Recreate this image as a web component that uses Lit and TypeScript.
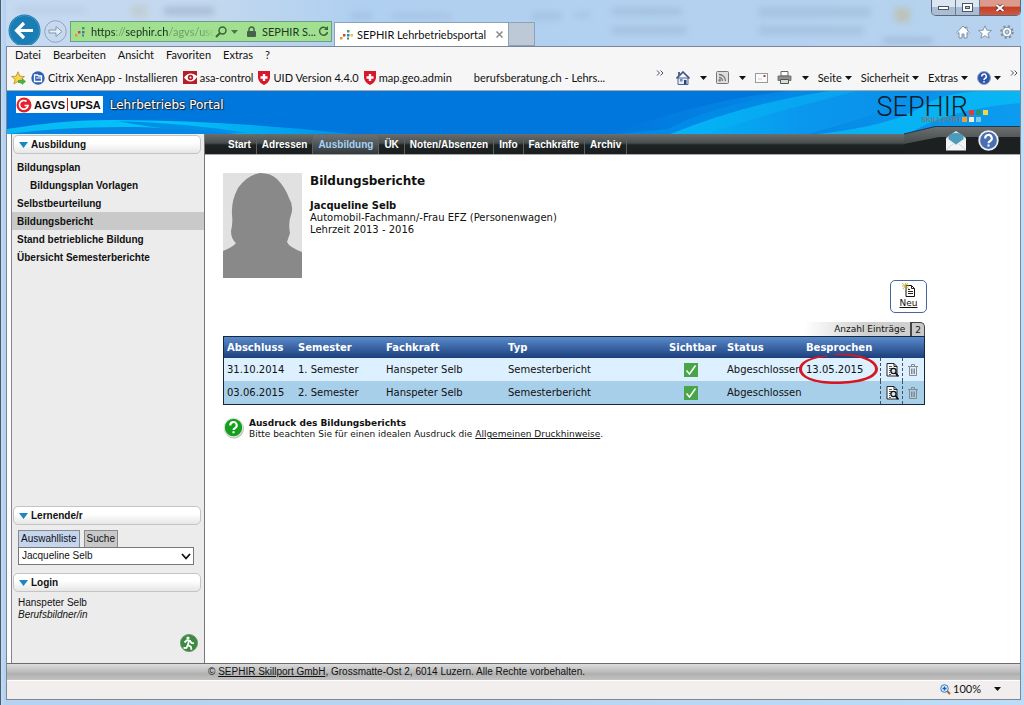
import { LitElement, html, svg, css } from "lit";
import { customElement, property, state } from "lit/decorators.js";
import { classMap } from "lit/directives/class-map.js";

interface Report {
  closed: string;
  semester: string;
  coach: string;
  type: string;
  status: string;
  discussed: string;
}

const REPORTS: Report[] = [
  { closed: "31.10.2014", semester: "1. Semester", coach: "Hanspeter Selb", type: "Semesterbericht", status: "Abgeschlossen", discussed: "13.05.2015" },
  { closed: "03.06.2015", semester: "2. Semester", coach: "Hanspeter Selb", type: "Semesterbericht", status: "Abgeschlossen", discussed: "" },
];

const caret = html`<svg class="caret" width="7" height="4" viewBox="0 0 7 4"><path d="M0 0h7L3.5 4z" fill="currentColor" /></svg>`;

const favicon = html`<svg width="13" height="12" viewBox="0 0 13 12">
  <path d="M0 8h2.500v2.500H0z" fill="#f0932b" /><path d="M3 5h2.500v2.500H3z" fill="#d8433b" /><path d="M7 1h2.500v2.500H7z" fill="#3aa655" />
  <path d="M7 5h2.500v2.500H7z" fill="#2d7fc4" /><path d="M7 8.500h2v2H7z" fill="#2f8f6a" /><path d="M10.500 5H13v2.500h-2.500z" fill="#e8c547" />
</svg>`;

const checkIcon = html`<svg class="check" role="img" aria-label="Sichtbar" width="14" height="14" viewBox="0 0 14 14">
  <rect width="14" height="14" fill="#4aa548" /><path d="M2.500 7.500l3 3.500 6-8.500" fill="none" stroke="#fff" stroke-width="1.500" />
</svg>`;

const viewIcon = html`<svg width="13" height="14" viewBox="0 0 13 14">
  <path d="M1 .5h7l3 3V13H1z" fill="#fff" stroke="#222" /><path d="M8 .5v3h3" fill="none" stroke="#222" />
  <path d="M3 3.500h3M3 5.500h3M3 7.500h2M3 9.500h1M3 11.500h2" stroke="#555" />
  <circle cx="7.500" cy="8" r="2.600" fill="#d7e7f2" stroke="#111" stroke-width="1.300" /><path d="M9.500 10l3 3.500" stroke="#111" stroke-width="1.800" />
</svg>`;

const trashIcon = html`<svg width="10" height="12" viewBox="0 0 10 12">
  <path d="M0 2.500h10M3.500 2V.5h3V2M1.500 3v8.500h7V3M3.500 4.500V10M5 4.500V10M6.500 4.500V10" fill="none" stroke="#85888c" />
</svg>`;

@customElement("side-heading")
class SideHeading extends LitElement {
  @property() label = "";

  static styles = css`
    :host { display: block; margin: 0 3px 0 1px; }
    .heading {
      display: flex; align-items: center; gap: 3px; width: 100%; height: 19px; padding: 0 5px;
      border: 1px solid #c4c4c6; border-radius: 5px;
      background: linear-gradient(#fff 40%, #e6e6e6);
      font: bold 10px/14px "Liberation Sans", Arial, sans-serif; color: #111; text-align: left;
    }
  `;

  render() {
    return html`<button class="heading" type="button">
      <svg width="9" height="6" viewBox="0 0 9 6"><path d="M0 0h9L4.500 6z" fill="#1c86bd" /></svg>${this.label}
    </button>`;
  }
}

@customElement("app-root")
class AppRoot extends LitElement {
  @state() private section = "Ausbildung";
  @state() private page = "Bildungsbericht";

  static styles = css`
    :host {
      display: flex; flex-direction: column; box-sizing: border-box; min-height: 100vh; padding: 0 3px 5px 5px;
      background: linear-gradient(90deg, #c3dcf3 0, #b5d3f0 3px, #b8d4f1 50%, #bcdcf8);
      border-left: 1px solid #4d5c6b;
      font-family: "Liberation Sans", Arial, sans-serif; color: #111;
    }
    *, *::before { box-sizing: border-box; }
    button { margin: 0; padding: 0; border: 0; background: none; font: inherit; color: inherit; white-space: nowrap; }
    svg { display: block; flex: none; }
    a { color: inherit; }

    .chrome { font: 11px/16px Lato, "Open Sans", sans-serif; color: #111; white-space: nowrap; }
    .titlebar { position: relative; display: flex; align-items: flex-end; height: 46px; }
    .glass { position: absolute; inset: 0; width: 100%; height: 100%; }
    .back { position: relative; margin: 0 3px 1px 2px; }
    .forward { position: relative; margin: 0 3px 3px 0; }
    .address {
      position: relative; display: flex; align-items: center; width: 262px; height: 21px; padding: 0 4px; margin: 0 2px 4px 0;
      background: #a0e090; border: 1px solid #6e9c86; color: #1d3a1c;
    }
    .url {
      width: 124px; height: 18px; margin-left: 3px; padding: 0; border: 0; outline: 0; font: inherit;
      background: linear-gradient(90deg, #16301a 24px, #6d9c68 24px 35px, #16301a 35px 77px, #6d9c68 77px 112px, #a0e090 124px);
      background-clip: text; -webkit-background-clip: text; -webkit-text-fill-color: transparent;
    }
    .address .label { flex: 1; margin: 0 2px 0 6px; }
    .lock { margin-left: 9px; }
    .address .caret { margin-left: 4px; color: #4c7448; }
    .tab {
      position: relative; display: flex; align-items: center; width: 175px; height: 24px; padding: 0 5px; gap: 4px;
      background: #fff; border: 1px solid #8ea2b7; border-bottom: 0;
    }
    .tab .label { flex: 1; }
    .newtab { position: relative; width: 26px; height: 24px; background: #bdc9d7; border: 1px solid #8ea2b7; border-left: 0; }
    .corner { position: relative; margin-left: auto; align-self: stretch; display: flex; flex-direction: column; align-items: flex-end; justify-content: space-between; }
    .winbtns { display: flex; border: 1px solid #5b6878; border-top: 0; border-radius: 0 0 5px 5px; overflow: hidden; height: 16px; }
    .winbtn { display: grid; place-items: center; width: 24px; background: linear-gradient(#dbe6f2 45%, #a9bdd4 50%); border-right: 1px solid #6d7a8a; }
    .winbtn.close { width: 40px; border-right: 0; background: linear-gradient(#dd9a8c 40%, #c2402a 50%, #d0583f); }
    .tools { display: flex; gap: 8px; padding: 0 7px 7px 0; }

    .window { flex: 1; display: flex; flex-direction: column; background: #fff; border: 1px solid #7b8794; }
    .menubar { display: flex; align-items: flex-start; gap: 12px; height: 20px; padding: 0 8px; background: #f6f6f6; }
    .favbar { display: flex; justify-content: space-between; align-items: center; height: 24px; padding: 0 2px 2px 4px; background: #f6f6f6; border-bottom: 1px solid #a5a9ad; }
    .favs, .cmds, .fav, .cmd { display: flex; align-items: center; }
    .fav { gap: 3px; margin-right: 5px; }
    .fav.plain { margin-left: 17px; }
    .cmd { gap: 3px; margin-right: 9px; }
    .cmd.icon { gap: 10px; margin-right: 9px; }
    .more { align-self: flex-start; }
    .cmds .more:first-child { margin-right: 12px; }

    .banner { position: relative; display: flex; justify-content: space-between; height: 43px; padding: 5px 32px 0 9px; background: #0077dd; overflow: hidden; }
    .wave { position: absolute; inset: 0; width: 100%; height: 100%; }
    .brand { position: relative; display: flex; align-items: flex-start; gap: 7px; }
    .agvs { display: flex; align-items: center; gap: 2px; height: 17px; padding: 0 2px 0 0; background: #fff; font-size: 11px; font-weight: bold; line-height: 16px; }
    .agvs .bar { width: 1px; height: 13px; background: #e01818; }
    .portal { font: 12px/18px "DejaVu Sans", Verdana, sans-serif; color: #fff; text-shadow: 1px 1px 1px #123, -1px 0 1px #246, 0 -1px 1px #246; }
    .sephir { position: relative; display: flex; padding-top: 1px; }
    .sephir .name { font: 300 27px/20px Roboto, sans-serif; color: #0b1c2c; }
    .sephir .sub { position: absolute; right: 27px; top: 20px; font: bold 7px/7px "Liberation Sans", Arial, sans-serif; color: #6f7f78; }
    .sephir svg { margin-top: 13px; overflow: visible; }

    .body { flex: 1; display: grid; grid-template-columns: 198px 1fr; }
    .side { display: flex; flex-direction: column; margin-left: 4px; background: #ececec; border-left: 1px solid #85858a; border-right: 1px solid #77777c; padding-top: 1px; }
    .tree { list-style: none; margin: 4px 0 auto; padding: 0; font: bold 10px/17px "Liberation Sans", Arial, sans-serif; }
    .tree a { display: block; padding: 1px 0 0 5px; text-decoration: none; }
    .tree .sub { padding-left: 18px; }
    .tree .current { background: #c9c9c9; }
    .picker { margin: 5px 10px 8px 6px; font: 10px/14px "Liberation Sans", Arial, sans-serif; }
    .pickertabs { display: flex; gap: 4px; }
    .pickertab { height: 17px; padding: 0 2px; border: 1px solid #8a8a8a; border-bottom: 0; background: #c8c8c8; }
    .pickertab.on { background: #c5d5ee; }
    .selectwrap { position: relative; }
    .select { display: block; width: 100%; height: 18px; padding: 0 3px; margin: 0; border: 1px solid #777; border-radius: 0; background: #fff; appearance: none; font: inherit; color: #111; }
    .selectwrap svg { position: absolute; right: 3px; top: 6px; pointer-events: none; }
    .user { margin: 5px 6px 0; font: 10px/12px "Liberation Sans", Arial, sans-serif; }
    .exit { align-self: flex-end; margin: 13px 6px 11px 0; }

    .main { display: flex; flex-direction: column; }
    .nav { position: relative; display: flex; align-items: center; height: 21px; padding-left: 18px; background: linear-gradient(#6a6e6e 0, #484d4d 9px, #1d2223 11px, #1a1e1f 100%); border-bottom: 1px solid #a9a9a9; font: bold 10px/20px "Liberation Sans", Arial, sans-serif; color: #fff; }
    .nav a { padding: 0 5px; height: 19px; border-right: 1px solid #5b6061; text-decoration: none; }
    .nav a.on { color: #a5d3f7; background: linear-gradient(#6b7072, #33393b); }
    .ramp { position: absolute; right: 0; top: -8px; }
    .quick { position: relative; display: flex; align-items: center; gap: 12px; margin: -7px 21px 0 auto; }

    .content { padding: 18px 95px 0 18px; font: 10px/12px "DejaVu Sans", Verdana, sans-serif; }
    .person { display: flex; gap: 8px; }
    .person h1 { margin: 0 0 10px; font-size: 12px; line-height: 17px; }
    .person p { margin: 0; }
    .new { display: flex; flex-direction: column; align-items: center; width: 37px; height: 33px; margin: 2px -2px 9px auto; padding-top: 2px; border: 1px solid #45679d; border-radius: 5px; background: #fff; font-size: 9px; line-height: 12px; text-decoration: underline; }
    .count { display: flex; width: fit-content; margin: 0 0 0 auto; height: 14px; font-size: 9px; line-height: 14px; }
    .count .text { padding: 0 5px 0 30px; background: linear-gradient(90deg, #fff, #d0d0d0 60%); }
    .count .num { padding: 0 3px; background: #c9c9c9; border: 1px solid #444; border-left-width: 2px; border-bottom: 0; border-radius: 0 5px 0 0; }

    .reports { width: 100%; table-layout: fixed; border-collapse: separate; border-spacing: 0; border: 1px solid #16283c; text-align: left; }
    .reports th, .reports td { padding: 0 0 0 3px; white-space: nowrap; }
    .reports th { height: 21px; color: #fff; }
    .reports thead { background: linear-gradient(#5a8acb, #1c3f7c); }
    .reports td { position: relative; height: 23px; font-size: 10px; }
    .reports .odd { background: #dcf0ff; }
    .reports .even { background: #a8cfea; }
    .reports .tool { border-left: 1px dashed #45525e; padding-left: 5px; }
    .reports .tool button { display: block; }
    .reports .mid { padding-right: 12px; }
    .reports .mid .check { margin: 0 auto; }
    .c1 { width: 71px; } .c2 { width: 88px; } .c3 { width: 122px; } .c5 { width: 58px; } .c6 { width: 79px; } .c7 { width: 77px; } .c8 { width: 22px; }
    .ring { position: absolute; left: -5px; top: -5px; }

    .hint { display: flex; gap: 4px; margin-top: 12px; font-size: 9px; line-height: 11px; }
    .hint p { margin: 1px 0 0; }

    .foot { height: 17px; padding-left: 201px; border-top: 1px solid #6c6c6c; background: linear-gradient(#dcdcdc 0, #bcbcbc 50%, #b0b0b0 60%, #c2c2c2); font-size: 10px; line-height: 16px; }
    .status { display: flex; justify-content: flex-end; align-items: center; height: 19px; padding: 0 19px 2px 0; gap: 2px; border-top: 1px solid #fff; background: #f1eeed; }
    .status .caret { margin-left: 11px; }
  `;

  private chevrons() {
    return html`<svg class="more" width="8" height="7" viewBox="0 0 8 7"><path d="M1 .5l2.500 2.500L1 5.500M4.500 .5L7 3 4.500 5.500" fill="none" stroke="#46546a" /></svg>`;
  }

  private renderTitlebar() {
    return html`<div class="titlebar chrome">
      <svg class="glass" viewBox="0 0 1014 46" preserveAspectRatio="none" aria-hidden="true">
        <defs>
          <linearGradient id="gl" x2="1"><stop offset="0" stop-color="#c5daf0" /><stop offset=".2" stop-color="#c3d8ee" /><stop offset=".34" stop-color="#b0d0f1" /><stop offset="1" stop-color="#b6d2ee" /></linearGradient>
          <filter id="soft"><feGaussianBlur stdDeviation="3" /></filter>
        </defs>
        <rect width="1014" height="46" fill="url(#gl)" />
        <g filter="url(#soft)" fill="#7f98b5" opacity=".4">
          <rect x="10" y="7" width="70" height="6" opacity=".4" /><rect x="125" y="5" width="16" height="12" fill="#b5ab80" opacity=".6" /><rect x="158" y="7" width="50" height="8" />
          <rect x="345" y="12" width="20" height="8" opacity=".5" /><rect x="385" y="13" width="60" height="6" opacity=".5" /><rect x="525" y="12" width="30" height="8" opacity=".6" /><rect x="568" y="12" width="16" height="6" opacity=".5" />
          <rect x="605" y="8" width="70" height="7" opacity=".7" /><rect x="605" y="27" width="75" height="7" opacity=".7" />
          <rect x="752" y="7" width="112" height="10" opacity=".6" /><rect x="752" y="26" width="105" height="9" opacity=".6" />
          <rect x="888" y="8" width="15" height="14" fill="#c8ad68" /><rect x="876" y="38" width="50" height="5" />
        </g>
      </svg>
      <button class="back" aria-label="Zurück"><svg width="33" height="31" viewBox="0 0 33 31">
        <circle cx="16.500" cy="16.500" r="16" fill="#1a7db4" /><circle cx="16.500" cy="16.500" r="15" fill="none" stroke="#4ba3d0" stroke-width=".6" />
        <path d="M25 16.500H9M16 9l-7.500 7.500L16 24" fill="none" stroke="#fff" stroke-width="3.200" />
      </svg></button>
      <button class="forward" aria-label="Vorwärts"><svg width="23" height="23" viewBox="0 0 23 23">
        <circle cx="11.500" cy="11.500" r="10.800" fill="#c7d9ee" stroke="#8fa3bb" />
        <path d="M5 10h7V6.500l6 5-6 5V13H5z" fill="#e6eef7" stroke="#8597ad" />
      </svg></button>
      <div class="address">
        ${favicon}
        <input class="url" aria-label="Adresse" value="https://sephir.ch/agvs/user" />
        <svg width="12" height="12" viewBox="0 0 12 12"><circle cx="7.500" cy="4.500" r="3.500" fill="none" stroke="#3c6438" stroke-width="1.500" /><path d="M5 7L1 11" stroke="#3c6438" stroke-width="2" /></svg>
        ${caret}
        <svg class="lock" width="9" height="12" viewBox="0 0 9 12"><rect y="5" width="9" height="6" rx="1" fill="#48604a" /><path d="M2 5V3.500a2.500 2.500 0 0 1 5 0V5" fill="none" stroke="#48604a" stroke-width="1.500" /></svg>
        <span class="label">SEPHIR S...</span>
        <svg width="11" height="11" viewBox="0 0 11 11"><path d="M8.500 2.500A4 4 0 1 0 9.500 6" fill="none" stroke="#3c6438" stroke-width="1.500" /><path d="M6 4h4V0z" fill="#3c6438" /></svg>
      </div>
      <div class="tab">${favicon}<span class="label">SEPHIR Lehrbetriebsportal</span>
        <button aria-label="Tab schliessen"><svg width="7" height="7" viewBox="0 0 7 7"><path d="M.5.5l6 6M6.500.5l-6 6" stroke="#8a8a8a" stroke-width="1.500" /></svg></button>
      </div>
      <button class="newtab" aria-label="Neuer Tab"></button>
      <div class="corner">
        <div class="winbtns">
          <button class="winbtn" aria-label="Minimieren"><svg width="11" height="4" viewBox="0 0 11 4"><rect x=".5" y=".5" width="10" height="3" fill="#fff" stroke="#4b5664" /></svg></button>
          <button class="winbtn" aria-label="Wiederherstellen"><svg width="11" height="9" viewBox="0 0 11 9"><rect x=".5" y=".5" width="10" height="8" fill="#fff" stroke="#4b5664" /><rect x="3.500" y="3.500" width="4" height="2" fill="#b9c8da" stroke="#4b5664" /></svg></button>
          <button class="winbtn close" aria-label="Schliessen"><svg width="10" height="8" viewBox="0 0 10 8"><path d="M1.500 1l7 6M8.500 1l-7 6" stroke="#5a2a26" stroke-width="3.400" /><path d="M1.500 1l7 6M8.500 1l-7 6" stroke="#fff" stroke-width="2" /></svg></button>
        </div>
        <div class="tools">
          <button aria-label="Startseite"><svg width="14" height="14" viewBox="0 0 14 14"><path d="M7 1L.8 7.500l1 1L3 7.500V13h3V9h2v4h3V7.500l1.200 1 1-1L11 5V2H9.500v1.500z" fill="#fff" stroke="#7d8ea3" /></svg></button>
          <button aria-label="Favoriten"><svg width="14" height="14" viewBox="0 0 14 14"><path d="M7 .8l1.800 4.400 4.700.3-3.600 3 1.200 4.700L7 10.700l-4.100 2.500 1.200-4.700-3.600-3 4.700-.3z" fill="#fff" stroke="#7d8ea3" stroke-width=".9" /></svg></button>
          <button aria-label="Extras"><svg width="14" height="14" viewBox="0 0 14 14"><circle cx="7" cy="7" r="5.600" fill="none" stroke="#7d8ea3" stroke-width="2.400" stroke-dasharray="2.200" /><circle cx="7" cy="7" r="4.600" fill="#fff" stroke="#7d8ea3" stroke-width=".8" /><circle cx="7" cy="7" r="2" fill="#bcd3ec" stroke="#7d8ea3" /></svg></button>
        </div>
      </div>
    </div>`;
  }

  private renderFavbar() {
    const shield = html`<svg width="12" height="14" viewBox="0 0 12 14"><path d="M0 0h12v7q-1 5-6 7-5-2-6-7z" fill="#d8182a" /><path d="M4.800 3h2.400v2.300h2.300v2.400H7.200V10H4.800V7.700H2.500V5.300h2.300z" fill="#fff" /></svg>`;
    return html`<div class="favbar chrome">
      <div class="favs">
        <button class="fav" aria-label="Zu Favoriten hinzufügen"><svg width="15" height="14" viewBox="0 0 15 14"><path d="M7 .8l1.800 4.400 4.700.3-3.600 3 1.200 4.300L7 10.400l-4.100 2.400 1.200-4.300-3.600-3 4.700-.3z" fill="#f8d64c" stroke="#c2922a" stroke-width=".9" /><path d="M7 9h4V7l4 3.500-4 3.500v-2H7z" fill="#4bb043" /></svg></button>
        <button class="fav"><svg width="14" height="14" viewBox="0 0 14 14"><circle cx="7" cy="7" r="6.700" fill="#2d5fb4" /><path d="M3.500 4h3l1 1h3v5.500h-7z" fill="none" stroke="#fff" stroke-width="1.300" /><path d="M5 7h5" stroke="#fff" /></svg>Citrix XenApp - Installieren</button>
        <button class="fav"><svg width="14" height="13" viewBox="0 0 14 13"><rect width="14" height="13" fill="#b81c25" /><path d="M1 6.500Q4 2.500 8 2.500q3 0 6 2.500v1q-3 4.500-6.500 4.500Q4 10.500 1 6.500z" fill="#fff" /><circle cx="7.500" cy="6.500" r="2.700" fill="#b81c25" /><circle cx="7.500" cy="6.500" r="1" fill="#fff" /></svg>asa-control</button>
        <button class="fav">${shield}UID Version 4.4.0</button>
        <button class="fav">${shield}map.geo.admin</button>
        <button class="fav plain">berufsberatung.ch - Lehrs...</button>
      </div>
      <div class="cmds">
        ${this.chevrons()}
        <button class="cmd icon" aria-label="Startseite"><svg width="14" height="14" viewBox="0 0 14 14"><path d="M2 7h10v6.500H2z" fill="#e6ebf5" stroke="#53658c" /><path d="M.5 7.500L7 1l6.500 6.500" fill="none" stroke="#3d5285" stroke-width="1.600" /><path d="M2 1h2v4H2z" fill="#53658c" /><path d="M8 9h2.500v4.500H8z" fill="#2c437d" /><path d="M4 8h2.500v2.500H4z" fill="#5d8bd0" /></svg>${caret}</button>
        <button class="cmd icon" aria-label="Feeds"><svg width="13" height="13" viewBox="0 0 13 13"><rect x=".5" y=".5" width="12" height="12" rx="1" fill="#ddd" stroke="#777" /><circle cx="3.700" cy="9.300" r="1.200" fill="#777" /><path d="M3 6.500a3.500 3.500 0 0 1 3.500 3.500M3 3.500A6.500 6.500 0 0 1 9.500 10" fill="none" stroke="#777" stroke-width="1.300" /></svg>${caret}</button>
        <button class="cmd" aria-label="E-Mail"><svg width="13" height="10" viewBox="0 0 13 10"><rect x=".5" y=".5" width="12" height="9" fill="#fbfbfb" stroke="#999" /><path d="M8.500 2h2v2h-2z" fill="#c33" /><path d="M3 6h4" stroke="#ccc" /></svg></button>
        <button class="cmd icon" aria-label="Drucken"><svg width="15" height="13" viewBox="0 0 15 13"><path d="M4 .5h7V5H4z" fill="#fff" stroke="#666" /><path d="M1 5h13v4.500H1z" fill="#8d8f92" stroke="#555" stroke-width=".7" /><path d="M3.500 8.500h8v4h-8z" fill="#cfe3cf" stroke="#555" /></svg>${caret}</button>
        <button class="cmd">Seite ${caret}</button>
        <button class="cmd">Sicherheit ${caret}</button>
        <button class="cmd">Extras ${caret}</button>
        <button class="cmd" aria-label="Hilfe"><svg width="14" height="14" viewBox="0 0 14 14"><circle cx="7" cy="7" r="6.500" fill="#2c55ad" stroke="#9aa7bf" /><path d="M4.700 5.500a2.300 2.300 0 1 1 3.300 2Q7 8 7 9M7 10v1.500" fill="none" stroke="#fff" stroke-width="1.500" /></svg>${caret}</button>
        ${this.chevrons()}
      </div>
    </div>`;
  }

  private renderBanner() {
    return html`<header class="banner">
      <svg class="wave" viewBox="0 0 1012 43" preserveAspectRatio="none" aria-hidden="true">
        <defs>
          <linearGradient id="w1" x2="1"><stop offset="0" stop-color="#08b8f4" /><stop offset=".45" stop-color="#04c4f8" /><stop offset="1" stop-color="#0090e8" /></linearGradient>
          <linearGradient id="w2" x2="1"><stop offset="0" stop-color="#0077dd" /><stop offset="1" stop-color="#0c9cf0" /></linearGradient>
          <linearGradient id="w3" x2="1"><stop offset="0" stop-color="#02b6f5" /><stop offset=".5" stop-color="#0a97ee" /><stop offset="1" stop-color="#0a8fe8" /></linearGradient>
        </defs>
        <path d="M0 38Q60 28 110 29 230 30 345 43H0z" fill="url(#w1)" />
        <path d="M110 30Q170 42 240 42 180 32 110 30z" fill="#0090e8" />
        <path d="M0 43Q60 35 130 36 190 38 230 43z" fill="#0787e4" />
        <path d="M600 43Q700 8 780 0H1012V43z" fill="url(#w2)" />
        <path d="M660 38Q710 12 800 0H920Q830 10 690 43H610z" fill="#028be6" />
        <path d="M663 43Q740 12 822 0H930Q850 30 800 43z" fill="url(#w3)" />
        <path d="M663 43Q740 12 822 0H850Q760 22 700 43z" fill="#06b4f6" opacity=".5" />
        <path d="M810 43Q880 35 910 18 935 0 980 0H1012V12Q940 18 900 43z" fill="#08bdf6" opacity=".75" />
      </svg>
      <div class="brand">
        <span class="agvs"><svg width="16" height="16" viewBox="0 0 16 16"><circle cx="8" cy="8" r="7.500" fill="#e3202c" /><path d="M10.500 4.500a4.300 4.300 0 1 0 1.500 4H8.500" fill="none" stroke="#fff" stroke-width="1.700" /></svg><span>AGVS</span><span class="bar"></span><span>UPSA</span></span>
        <span class="portal">Lehrbetriebs Portal</span>
      </div>
      <div class="sephir"><span class="name">SEPHIR</span><span class="sub">SKILLPORT</span>
        <svg width="20" height="12" viewBox="0 0 20 12"><path d="M1 0h5v5H1z" fill="#e33b3b" /><path d="M8 0h5v5H8z" fill="#22976a" /><path d="M15 0h5v5h-5z" fill="#f0d84c" /><path d="M-6 7h5v5h-5z" fill="#f0a030" /><path d="M1 7h5v5H1z" fill="#f4eccb" /><path d="M8 7h5v5H8z" fill="#7bcbe6" /></svg>
      </div>
    </header>`;
  }

  private renderSide() {
    const items = ["Bildungsplan", "Bildungsplan Vorlagen", "Selbstbeurteilung", "Bildungsbericht", "Stand betriebliche Bildung", "Übersicht Semesterberichte"];
    return html`<aside class="side">
      <side-heading label="Ausbildung"></side-heading>
      <ul class="tree">
        ${items.map((t) => html`<li><a href="#" class=${classMap({ sub: t.endsWith("Vorlagen"), current: t === this.page })} @click=${() => (this.page = t)}>${t}</a></li>`)}
      </ul>
      <side-heading label="Lernende/r"></side-heading>
      <div class="picker">
        <div class="pickertabs"><button class="pickertab on">Auswahlliste</button><button class="pickertab">Suche</button></div>
        <div class="selectwrap">
          <select class="select" aria-label="Lernende/r"><option>Jacqueline Selb</option></select>
          <svg width="10" height="7" viewBox="0 0 10 7"><path d="M1 1l4 4.500L9 1" fill="none" stroke="#111" stroke-width="1.800" /></svg>
        </div>
      </div>
      <side-heading label="Login"></side-heading>
      <div class="user">Hanspeter Selb<br /><em>Berufsbildner/in</em></div>
      <button class="exit" aria-label="Abmelden"><svg width="18" height="18" viewBox="0 0 18 18">
        <circle cx="9" cy="9" r="8.600" fill="#3b8a3d" stroke="#6c8d6c" stroke-width=".8" /><circle cx="8" cy="4" r="1.600" fill="#fff" />
        <path d="M4.500 8.500L7 6.200l3 .6 1.500 2.200 2.500.3M9 7l-1.200 4 3 1.600.7 3.200M7.800 11L6.500 13.800 3.500 14" fill="none" stroke="#fff" stroke-width="1.800" />
      </svg></button>
    </aside>`;
  }

  private renderNav() {
    const sections = ["Start", "Adressen", "Ausbildung", "ÜK", "Noten/Absenzen", "Info", "Fachkräfte", "Archiv"];
    return html`<nav class="nav">
      <svg class="ramp" width="116" height="28" viewBox="0 0 116 28" aria-hidden="true">
        <defs><linearGradient id="rg" x2="0" y2="1"><stop offset="0" stop-color="#6a6e6e" /><stop offset="1" stop-color="#454a4a" /></linearGradient></defs>
        <path d="M0 8L31 1H116V28H0z" fill="#1c2021" /><path d="M0 8L31 1H116V11H35L0 18z" fill="url(#rg)" /><path d="M0 8L31 .5H116" fill="none" stroke="#1d3a52" />
      </svg>
      ${sections.map((s) => html`<a href="#" class=${classMap({ on: s === this.section })} @click=${() => (this.section = s)}>${s}</a>`)}
      <div class="quick">
        <button aria-label="Nachrichten"><svg width="20" height="20" viewBox="0 0 20 20"><path d="M0 7L10 0l10 7v12H0z" fill="#dfe6ea" /><path d="M2.500 5q2-3 7.500-3t7.500 3v3L10 13.500 2.500 8z" fill="#4a9cba" /><path d="M0 7.500l10 7 10-7V19.500H0z" fill="#f2f4f5" /><path d="M0 19l7-6M20 19l-7-6" stroke="#cdd4d8" /></svg></button>
        <button aria-label="Hilfe"><svg width="21" height="21" viewBox="0 0 21 21"><circle cx="10.500" cy="10.500" r="9.300" fill="#4a6fae" stroke="#e9eff8" stroke-width="1.800" /><path d="M7.200 8.500a3.300 3.300 0 1 1 4.800 2.700q-1.500.8-1.500 2M10.500 14.500v2" fill="none" stroke="#fff" stroke-width="2.100" /></svg></button>
      </div>
    </nav>`;
  }

  private renderTable() {
    return html`<table class="reports">
      <colgroup><col class="c1" /><col class="c2" /><col class="c3" /><col /><col class="c5" /><col class="c6" /><col class="c7" /><col class="c8" /><col class="c8" /></colgroup>
      <thead><tr><th>Abschluss</th><th>Semester</th><th>Fachkraft</th><th>Typ</th><th>Sichtbar</th><th>Status</th><th>Besprochen</th><th></th><th></th></tr></thead>
      <tbody>
        ${REPORTS.map((r, i) => html`<tr class=${i % 2 ? "even" : "odd"}>
          <td>${r.closed}</td><td>${r.semester}</td><td>${r.coach}</td><td>${r.type}</td>
          <td class="mid">${checkIcon}</td><td>${r.status}</td>
          <td>${r.discussed}${r.discussed
            ? html`<svg class="ring" width="81" height="32" viewBox="0 0 81 32" aria-hidden="true">${svg`<path fill-rule="evenodd" fill="#d81620" d="M36 1C60-1 80 6 80 16 80 26 60 31 38 31 16 31 1 25 1 16 1 9 12 3 30 2.500L30 3.500C14 5 4 10 4 16 4 24 18 28.500 38 28.500 58 28.500 77 24 77 16 77 8 60 2 36 2z" />`}</svg>`
            : ""}</td>
          <td class="tool"><button aria-label="Anzeigen">${viewIcon}</button></td>
          <td class="tool"><button aria-label="Löschen">${trashIcon}</button></td>
        </tr>`)}
      </tbody>
    </table>`;
  }

  render() {
    return html`
      ${this.renderTitlebar()}
      <div class="window">
        <div class="menubar chrome">${["Datei", "Bearbeiten", "Ansicht", "Favoriten", "Extras", "?"].map((m) => html`<button>${m}</button>`)}</div>
        ${this.renderFavbar()}
        ${this.renderBanner()}
        <div class="body">
          ${this.renderSide()}
          <div class="main">
            ${this.renderNav()}
            <main class="content">
              <section class="person">
                <svg width="79" height="105" viewBox="0 0 79 105" role="img" aria-label="Jacqueline Selb"><rect width="79" height="105" fill="#e1e1e1" /><path d="M37 0Q48 0 54 6 62 14 66 25 71 33 68 42 65 50 67 60 65 66 64 69 66 74 79 79V105H0V78Q10 74 13 70 8 66 8 58 10 50 9 42 8 28 15 15 24 2 37 0z" fill="#898989" /></svg>
                <div><h1>Bildungsberichte</h1><p><strong>Jacqueline Selb</strong></p><p>Automobil-Fachmann/-Frau EFZ (Personenwagen)</p><p>Lehrzeit 2013 - 2016</p></div>
              </section>
              <button class="new"><svg width="14" height="14" viewBox="0 0 14 14"><path d="M4 2.500h5.500l3 3v8H4z" fill="#fff" stroke="#111" /><path d="M9.500 2.500v3h3M6 6.500h2M6 8.500h5M6 10.500h5" fill="none" stroke="#222" /><path d="M0 0l7 6M6 0L1 6M3.500 0v6M0 3h7" stroke="#b9a52d" stroke-width=".8" /></svg>Neu</button>
              <div class="count"><span class="text">Anzahl Einträge</span><span class="num">2</span></div>
              ${this.renderTable()}
              <section class="hint">
                <svg width="22" height="22" viewBox="0 0 22 22"><circle cx="11" cy="11.500" r="10" fill="#b9bdb9" /><circle cx="10.500" cy="10.500" r="9.300" fill="#14a01c" stroke="#dfe6df" stroke-width="1.200" /><path d="M7.300 8.500a3.200 3.200 0 1 1 4.700 2.600q-1.500.8-1.500 2M10.500 14.300v2" fill="none" stroke="#fff" stroke-width="2.100" /></svg>
                <p><strong>Ausdruck des Bildungsberichts</strong><br />Bitte beachten Sie für einen idealen Ausdruck die <a href="#">Allgemeinen Druckhinweise</a>.</p>
              </section>
            </main>
          </div>
        </div>
        <footer class="foot">© <a href="#">SEPHIR Skillport GmbH</a>, Grossmatte-Ost 2, 6014 Luzern. Alle Rechte vorbehalten.</footer>
        <div class="status chrome">
          <svg width="11" height="11" viewBox="0 0 11 11"><path d="M6.500 6.500L10 10" stroke="#a8672e" stroke-width="2" /><circle cx="4.500" cy="4.500" r="3.800" fill="#d8ecfb" stroke="#3a7cc0" /><path d="M4.500 2.500v4M2.500 4.500h4" stroke="#1d62b0" stroke-width="1.300" /></svg>
          <span>100%</span>${caret}
        </div>
      </div>
    `;
  }
}
